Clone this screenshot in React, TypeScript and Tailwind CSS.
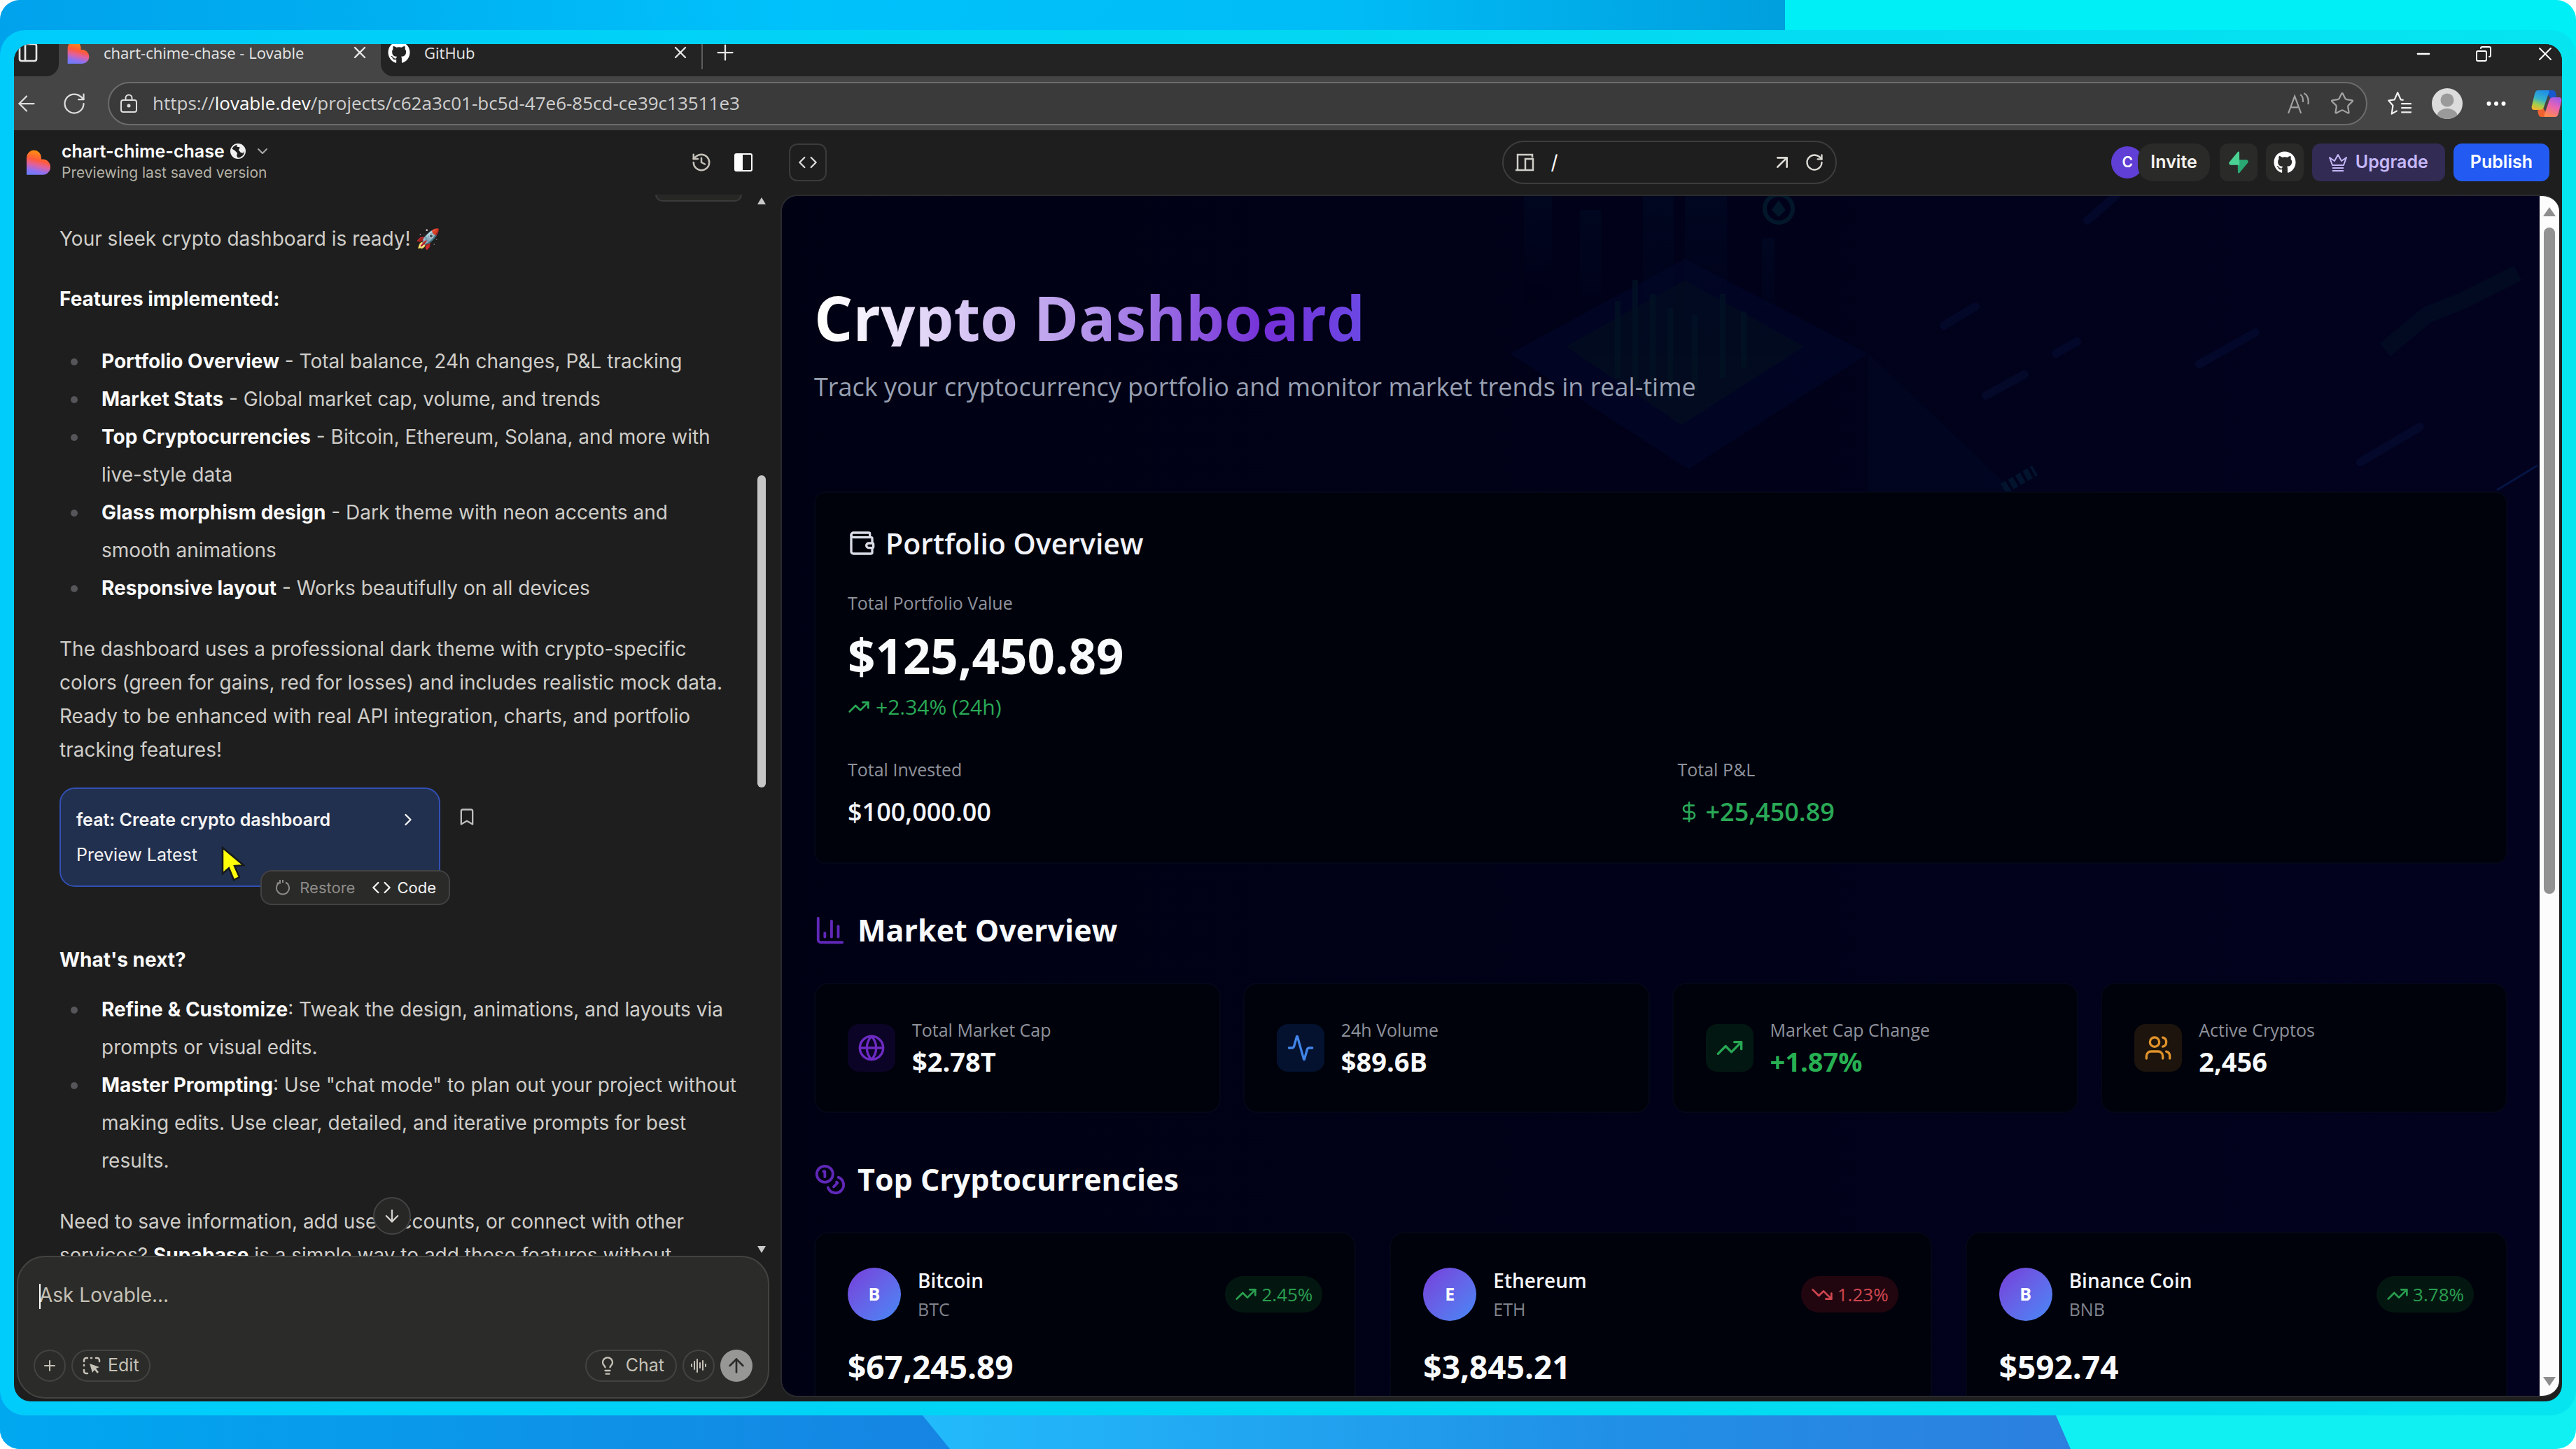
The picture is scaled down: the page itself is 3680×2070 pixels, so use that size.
import React from "react";
import {
	Activity,
	ArrowDown,
	ArrowLeft,
	ArrowUp,
	ArrowUpRight,
	AudioLines,
	Bookmark,
	ChartColumn,
	ChevronDown,
	ChevronRight,
	Code,
	Coins,
	Copy,
	DollarSign,
	Ellipsis,
	Globe,
	History,
	Lightbulb,
	Minus,
	PanelLeft,
	Plus,
	RotateCw,
	Star,
	TrendingDown,
	TrendingUp,
	Users,
	Wallet,
	X,
} from "lucide-react";
import { FaGithub } from "react-icons/fa";

const features = [
	{ name: "Portfolio Overview", text: " - Total balance, 24h changes, P&L tracking" },
	{ name: "Market Stats", text: " - Global market cap, volume, and trends" },
	{
		name: "Top Cryptocurrencies",
		text: " - Bitcoin, Ethereum, Solana, and more with live-style data",
	},
	{
		name: "Glass morphism design",
		text: " - Dark theme with neon accents and smooth animations",
	},
	{ name: "Responsive layout", text: " - Works beautifully on all devices" },
];

const nextSteps = [
	{
		name: "Refine & Customize",
		text: ": Tweak the design, animations, and layouts via prompts or visual edits.",
	},
	{
		name: "Master Prompting",
		text: ': Use "chat mode" to plan out your project without making edits. Use clear, detailed, and iterative prompts for best results.',
	},
];

const marketStats = [
	{
		label: "Total Market Cap",
		value: "$2.78T",
		icon: Globe,
		tile: "bg-[#0c0426] text-[#6d2bc4]",
		valueColor: "text-[#f8fafc]",
	},
	{
		label: "24h Volume",
		value: "$89.6B",
		icon: Activity,
		tile: "bg-[#041230] text-[#4285e8]",
		valueColor: "text-[#f8fafc]",
	},
	{
		label: "Market Cap Change",
		value: "+1.87%",
		icon: TrendingUp,
		tile: "bg-[#031712] text-[#27a854]",
		valueColor: "text-[#27b052]",
	},
	{
		label: "Active Cryptos",
		value: "2,456",
		icon: Users,
		tile: "bg-[#1c140d] text-[#e0922a]",
		valueColor: "text-[#f8fafc]",
	},
];

const coins = [
	{ name: "Bitcoin", symbol: "BTC", price: "$67,245.89", change: "2.45%", up: true },
	{ name: "Ethereum", symbol: "ETH", price: "$3,845.21", change: "1.23%", up: false },
	{ name: "Binance Coin", symbol: "BNB", price: "$592.74", change: "3.78%", up: true },
];

const LovableLogo: React.FC<{ id: string; className?: string }> = ({ id, className }) => (
	<svg viewBox="0 0 24 25" className={className} aria-hidden="true">
		<defs>
			<linearGradient id={id} x1="0.6" y1="0" x2="0.35" y2="1">
				<stop offset="0.1" stopColor="#ff8a14" />
				<stop offset="0.42" stopColor="#ff5a3c" />
				<stop offset="0.62" stopColor="#e0619f" />
				<stop offset="0.85" stopColor="#8f70f2" />
				<stop offset="1" stopColor="#6f7bf5" />
			</linearGradient>
		</defs>
		<path
			d="M0 25V7.6A7.4 7.4 0 0 1 14.8 7.6V9.4H16.3A7.7 7.8 0 0 1 16.3 25Z"
			fill={`url(#${id})`}
		/>
	</svg>
);

const SupabaseLogo = () => (
	<svg viewBox="0 0 24 24" className="size-8" aria-hidden="true">
		<path d="M12.9 23.2c-.6.7-1.7.3-1.7-.6L11 9.2h9.3c1.7 0 2.6 1.9 1.6 3.2z" fill="#2aa873" />
		<path d="M11.1.8c.6-.7 1.7-.3 1.7.6l.1 13.4H3.7c-1.7 0-2.6-1.9-1.6-3.2z" fill="#4bd193" />
	</svg>
);

const CopilotLogo = () => (
	<svg viewBox="0 0 44 40" className="h-10 w-11 shrink-0" aria-hidden="true">
		<defs>
			<linearGradient id="copilot-a" x1="0.6" y1="0" x2="0.3" y2="1">
				<stop offset="0" stopColor="#1f8fe8" />
				<stop offset="0.45" stopColor="#35b3c9" />
				<stop offset="0.75" stopColor="#a5cf4a" />
				<stop offset="1" stopColor="#f2b32e" />
			</linearGradient>
			<linearGradient id="copilot-b" x1="0.7" y1="0" x2="0.3" y2="1">
				<stop offset="0" stopColor="#a05be8" />
				<stop offset="0.45" stopColor="#e863b4" />
				<stop offset="1" stopColor="#ff8a4c" />
			</linearGradient>
		</defs>
		<path d="M20 1h11c3 0 4 3 5 9l-8 3z" fill="#1659cf" />
		<path d="M24 39H14c-3 0-4-4-5-9l8-4z" fill="#f0622f" />
		<path d="M10 1h14c2 0 2 2 1 4l-7 20c-1 3-3 4-6 4H4c-3 0-4-3-3-6L5 6c1-3 2-5 5-5z" fill="url(#copilot-a)" />
		<path d="M34 39H20c-2 0-2-2-1-4l7-20c1-3 3-4 6-4h8c3 0 4 3 3 6l-4 17c-1 3-2 5-5 5z" fill="url(#copilot-b)" />
	</svg>
);

const Backdrop = () => (
	<svg
		viewBox="0 0 3680 2070"
		preserveAspectRatio="none"
		className="absolute inset-0 size-full"
		aria-hidden="true"
	>
		<defs>
			<linearGradient id="bd-top">
				<stop offset="0" stopColor="#00a2ec" />
				<stop offset="0.18" stopColor="#00adef" />
				<stop offset="0.45" stopColor="#00c2fb" />
				<stop offset="0.75" stopColor="#00bcf6" />
				<stop offset="1" stopColor="#009fdd" />
			</linearGradient>
			<linearGradient id="bd-left">
				<stop offset="0" stopColor="#00a8f0" />
				<stop offset="1" stopColor="#1684e2" />
			</linearGradient>
			<linearGradient id="bd-mid" x1="0.44">
				<stop offset="0" stopColor="#22bbfb" />
				<stop offset="0.6" stopColor="#2090e6" />
				<stop offset="1" stopColor="#2c7fde" />
			</linearGradient>
		</defs>
		<rect width="2550" height="1035" fill="url(#bd-top)" />
		<rect x="2550" width="1130" height="1035" fill="#00eef6" />
		<rect y="1035" width="3680" height="1035" fill="#10f0f3" />
		<path d="M0 1035H2600L2937 2022L2958 2070H0Z" fill="url(#bd-mid)" />
		<path d="M0 1035H900L1318 2022L1357 2070H0Z" fill="url(#bd-left)" />
	</svg>
);

const BrowserTabs = () => (
	<div className="flex h-[46px] shrink-0 overflow-hidden bg-[#454545] font-['Open_Sans',sans-serif] text-[22px] leading-6 text-[#e6e6e6]">
		<div className="flex w-16 items-start rounded-br-[18px] bg-[#232323] pl-1">
			<button aria-label="Tab actions" className="flex h-6 items-center">
				<PanelLeft className="size-8" strokeWidth={2} />
			</button>
		</div>
		<div className="flex w-[460px] items-start pr-4 pl-3">
			<div className="flex h-6 w-full items-center">
				<LovableLogo id="tab-heart" className="h-8 w-8" />
				<span className="ml-5">chart-chime-chase - Lovable</span>
				<button aria-label="Close tab" className="ml-auto">
					<X className="size-7" strokeWidth={2} />
				</button>
			</div>
		</div>
		<div className="flex flex-1 items-start rounded-bl-[18px] bg-[#232323]">
			<div className="flex h-6 w-[458px] items-center pr-4 pl-[10px]">
				<FaGithub className="size-8 text-white" />
				<span className="ml-5">GitHub</span>
				<button aria-label="Close tab" className="ml-auto">
					<X className="size-7" strokeWidth={2} />
				</button>
			</div>
			<span className="h-9 w-0.5 bg-[#5c5c5c]" />
			<button aria-label="New tab" className="ml-[14px] flex h-6 items-center">
				<Plus className="size-9" strokeWidth={1.5} />
			</button>
			<div className="ml-auto flex h-7 items-center gap-[60px] pr-2 text-white">
				<button aria-label="Minimize">
					<Minus className="size-7" strokeWidth={2} />
				</button>
				<button aria-label="Restore window">
					<Copy className="size-6 -scale-x-100" strokeWidth={2} />
				</button>
				<button aria-label="Close window">
					<X className="size-8" strokeWidth={1.5} />
				</button>
			</div>
		</div>
	</div>
);

const AddressBar = () => (
	<div className="flex h-[77px] shrink-0 items-center bg-[#454545] text-[#dedede]">
		<button aria-label="Back">
			<ArrowLeft className="size-9" strokeWidth={1.5} />
		</button>
		<button aria-label="Refresh" className="ml-8">
			<RotateCw className="size-9" strokeWidth={1.5} />
		</button>
		<div className="mr-7 ml-[30px] flex h-[62px] flex-1 items-center rounded-full border-2 border-[#6c6c6c] bg-[#3a3a3a] pr-4 pl-4">
			<svg viewBox="0 0 24 28" className="h-7 w-6" fill="none" stroke="currentColor" strokeWidth="2" aria-hidden="true">
				<rect x="1" y="9" width="22" height="17" rx="3" />
				<path d="M7.500 9V6a4.500 4.500 0 0 1 9 0v3" />
				<circle cx="12" cy="17" r="1.500" fill="currentColor" />
			</svg>
			<p className="ml-[22px] font-['Open_Sans',sans-serif] text-[26px] text-[#cfcfcf]">
				https://<span className="text-white">lovable.dev</span>
				/projects/c62a3c01-bc5d-47e6-85cd-ce39c13511e3
			</p>
			<button aria-label="Read aloud" className="ml-auto text-[#a2a2a2]">
				<svg viewBox="0 0 30 30" className="size-8" fill="none" stroke="currentColor" strokeWidth="2" aria-hidden="true">
					<path d="M1 28 9.500 5 18 28M4 20h11M17 3c3 2 4 6 3.500 10M22 1c5 3 6.500 9 5.500 15" />
				</svg>
			</button>
			<button aria-label="Add to favorites" className="ml-7 text-[#a2a2a2]">
				<Star className="size-9" strokeWidth={1.5} />
			</button>
		</div>
		<button aria-label="Favorites">
			<svg viewBox="0 0 32 32" className="size-9" fill="none" stroke="#f0f0f0" strokeWidth="2" strokeLinejoin="round" aria-hidden="true">
				<path d="M21 11.500 17.500 11 13.500 2 9.500 11 2 12l5.500 6.500L6 29l7-4M18 16h13M18 21.500h13M18 27h13" />
			</svg>
		</button>
		<button aria-label="Profile" className="ml-7">
			<svg viewBox="0 0 44 44" className="size-11" aria-hidden="true">
				<clipPath id="profile-clip">
					<circle cx="22" cy="22" r="22" />
				</clipPath>
				<g clipPath="url(#profile-clip)">
					<rect width="44" height="44" fill="#dcdcdc" />
					<circle cx="22" cy="17" r="9.500" fill="#9a9a9a" />
					<ellipse cx="22" cy="41" rx="15" ry="12" fill="#9a9a9a" />
				</g>
			</svg>
		</button>
		<button aria-label="Settings and more" className="mr-8 ml-[30px]">
			<Ellipsis className="size-9 text-white" strokeWidth={2} />
		</button>
		<button aria-label="Copilot">
			<CopilotLogo />
		</button>
	</div>
);

const ProjectHeader = () => (
	<header className="flex h-[92px] shrink-0 items-center">
		<div className="flex w-[1097px] items-center pr-[42px] pl-[18px]">
			<LovableLogo id="project-heart" className="h-9 w-[34px]" />
			<div className="ml-4">
				<button className="flex items-center text-[25px] leading-[30px] font-semibold text-white">
					chart-chime-chase
					<svg viewBox="0 0 24 24" className="ml-2 size-[22px]" aria-hidden="true">
						<circle cx="12" cy="12" r="11" fill="none" stroke="#f0f0f0" strokeWidth="2" />
						<path d="M11 1c5-1 10 3 12 9l-3 5-4-1-3-4 2-4-5-1zM2 8l5 3 4 4-1 4 2 4C5 22 0 17 1 9z" fill="#f0f0f0" />
					</svg>
					<ChevronDown className="ml-3 size-6 text-[#a8a8a8]" />
				</button>
				<p className="text-[21px] leading-[32px] text-[#b4b1a6]">Previewing last saved version</p>
			</div>
			<button aria-label="History" className="ml-auto">
				<History className="size-[30px] text-[#c5c1b8]" strokeWidth={2} />
			</button>
			<button aria-label="Toggle sidebar" className="ml-8">
				<svg viewBox="0 0 26 26" className="size-[26px]" aria-hidden="true">
					<rect x="1" y="1" width="24" height="24" rx="2" fill="none" stroke="#fff" strokeWidth="2" />
					<path d="M1 1h11v24H1z" fill="#fff" />
				</svg>
			</button>
		</div>
		<div className="grid flex-1 grid-cols-[1fr_auto_1fr] items-center pr-[18px] pl-[10px]">
			<button
				aria-label="Code"
				className="flex size-[54px] items-center justify-center rounded-xl border-2 border-[#3b3b3b] text-[#dcdcdc]"
			>
				<Code className="size-7" strokeWidth={2} />
			</button>
			<div className="flex h-[62px] w-[478px] items-center rounded-full border-2 border-[#3d3d3d] px-4">
				<svg viewBox="0 0 28 28" className="size-7" fill="none" stroke="#d0cec8" strokeWidth="2.500" aria-hidden="true">
					<path d="M1 25h13M4 25V3h21v4M15 25V9h11v16z" />
				</svg>
				<label className="ml-6 flex-1">
					<span className="sr-only">Route</span>
					<input
						defaultValue="/"
						className="h-10 w-full bg-transparent text-[28px] leading-10 text-white outline-none"
					/>
				</label>
				<button aria-label="Open in new tab">
					<ArrowUpRight className="size-8 text-[#dcdad4]" strokeWidth={2} />
				</button>
				<button aria-label="Reload preview" className="ml-4">
					<RotateCw className="size-7 text-[#dcdad4]" strokeWidth={2} />
				</button>
			</div>
			<div className="flex items-center justify-end text-[25px] font-semibold">
				<span className="flex size-[46px] items-center justify-center rounded-full bg-[#5f3fd6] text-[21px] text-white">
					C
				</span>
				<button className="relative -ml-2 h-[54px] rounded-[22px] bg-[#2a2a28] px-[18px] text-[#f5f3ee]">
					Invite
				</button>
				<button
					aria-label="Supabase"
					className="ml-[14px] flex size-[54px] items-center justify-center rounded-xl bg-[#2a2a28]"
				>
					<SupabaseLogo />
				</button>
				<button
					aria-label="GitHub"
					className="ml-3 flex size-[54px] items-center justify-center rounded-xl bg-[#2a2a28]"
				>
					<FaGithub className="size-8 text-white" />
				</button>
				<button className="ml-3 flex h-[54px] items-center gap-3 rounded-xl bg-[#322b54] px-6 text-[#c5b8f8]">
					<svg viewBox="0 0 26 26" className="size-[26px]" fill="none" stroke="currentColor" strokeWidth="2" strokeLinejoin="round" aria-hidden="true">
						<path d="M5 17h16l4-11-7 5-5-9-5 9-7-5zM5 21h16M5 25h16" />
					</svg>
					Upgrade
				</button>
				<button className="ml-3 h-[54px] rounded-xl bg-[#235bf2] px-6 text-white">Publish</button>
			</div>
		</div>
	</header>
);

const BulletList: React.FC<{ items: { name: string; text: string }[]; className: string }> = ({
	items,
	className,
}) => (
	<ul className={className}>
		{items.map((item) => (
			<li key={item.name} className="flex leading-[54px]">
				<span className="mt-[23px] mr-[34px] ml-4 size-[10px] shrink-0 rounded-full bg-[#55555a]" />
				<p>
					<strong className="font-bold text-[#fafafa]">{item.name}</strong>
					{item.text}
				</p>
			</li>
		))}
	</ul>
);

const VersionCard = () => (
	<div className="mt-[30px] flex gap-6">
		<div className="relative w-[544px] rounded-[22px] border-2 border-[#3150b4] bg-[#22304f] px-[22px] pt-7 pb-4 text-[25px]">
			<button className="flex h-8 w-full items-center justify-between pr-2 font-semibold text-[#f5f5f5]">
				feat: Create crypto dashboard
				<ChevronRight className="size-7" strokeWidth={2} />
			</button>
			<p className="mt-[18px] mb-3 leading-8 text-[#f2f2f2]">Preview Latest</p>
			<div className="absolute -right-4 -bottom-7 flex h-[50px] items-center rounded-2xl border-2 border-[#434143] bg-[#2a2a29] px-[18px] text-[22px]">
				<button className="flex items-center gap-3 text-[#8d8b88]">
					<svg viewBox="0 0 24 24" className="size-6" fill="none" stroke="currentColor" strokeWidth="2" aria-hidden="true">
						<path d="M8 4.500A9 9 0 1 0 16 4.500M8 1v4.500H3.500M12 1v4" />
					</svg>
					Restore
				</button>
				<button className="ml-6 flex items-center gap-2 text-[#f2f2f2]">
					<Code className="size-7" strokeWidth={2} />
					Code
				</button>
			</div>
			<svg viewBox="0 0 34 50" className="absolute top-[82px] left-[229px] h-[50px] w-[34px]" aria-hidden="true">
				<path d="M2 2v37l9-8 7 17 8-4-7-16 13-1z" fill="#fdfd0a" stroke="#15181c" strokeWidth="2.500" />
			</svg>
		</div>
		<button aria-label="Bookmark" className="mt-7 self-start">
			<Bookmark className="size-7 text-[#bdbdbd]" strokeWidth={2} />
		</button>
	</div>
);

const Composer = () => (
	<form className="relative mx-1 mb-1 h-[204px] shrink-0 rounded-[40px] border-2 border-[#434340] bg-[#2b2b29] p-[22px] text-[25px] text-[#c5c1b6]">
		<label className="block">
			<span className="sr-only">Message</span>
			<textarea
				placeholder="Ask Lovable..."
				className="mt-3 ml-2 block h-[98px] w-full resize-none bg-transparent text-[28px] leading-10 text-[#c5c1b6] outline-none placeholder:text-[#c5c1b6]"
			/>
		</label>
		<span className="absolute top-[38px] left-[30px] h-9 w-0.5 bg-white" />
		<div className="flex items-center gap-2">
			<button
				type="button"
				aria-label="Attach"
				className="flex size-[46px] items-center justify-center rounded-full border-2 border-[#434340]"
			>
				<Plus className="size-6" strokeWidth={2} />
			</button>
			<button
				type="button"
				className="flex h-[46px] items-center gap-[10px] rounded-full border-2 border-[#434340] px-[14px]"
			>
				<svg viewBox="0 0 26 26" className="size-[26px]" fill="none" stroke="currentColor" strokeWidth="2.500" strokeLinecap="round" aria-hidden="true">
					<path d="M2 7V5a3 3 0 0 1 3-3h2M19 2h2a3 3 0 0 1 3 3v2M7 24H5a3 3 0 0 1-3-3v-2M12 2h1M2 12v1" />
					<path d="M10 10l14 5-5 2 4 5-2 2-4-5-3 4z" fill="currentColor" stroke="none" />
				</svg>
				Edit
			</button>
			<button
				type="button"
				className="ml-auto flex h-[46px] items-center gap-3 rounded-full border-2 border-[#434340] px-4"
			>
				<Lightbulb className="size-7" strokeWidth={2} />
				Chat
			</button>
			<button
				type="button"
				aria-label="Voice"
				className="flex size-[46px] items-center justify-center rounded-full border-2 border-[#434340]"
			>
				<AudioLines className="size-6" strokeWidth={2} />
			</button>
			<button
				type="submit"
				aria-label="Send"
				className="flex size-[46px] items-center justify-center rounded-full bg-[#979795] text-[#2b2b29]"
			>
				<ArrowUp className="size-8" strokeWidth={2} />
			</button>
		</div>
	</form>
);

const ChatPanel = () => (
	<aside className="flex w-[1095px] shrink-0 flex-col">
		<div className="relative flex min-h-0 flex-1">
			<div className="min-w-0 flex-1 overflow-hidden pr-[22px] pl-[65px] text-[28px] leading-[48px] text-[#cfcdc9]">
				<div className="ml-auto h-[10px] w-[124px] rounded-b-xl border-2 border-t-0 border-[#3a3a3a] bg-[#272725]" />
				<p className="mt-[29px]">
					Your sleek crypto dashboard is ready! <span>🚀</span>
				</p>
				<p className="mt-[38px] font-bold text-[#fafafa]">Features implemented:</p>
				<BulletList items={features} className="mt-[38px]" />
				<p className="mt-9">
					The dashboard uses a professional dark theme with crypto-specific colors (green for gains, red for
					losses) and includes realistic mock data. Ready to be enhanced with real API integration, charts, and
					portfolio tracking features!
				</p>
				<VersionCard />
				<p className="mt-20 font-bold text-[#fafafa]">What's next?</p>
				<BulletList items={nextSteps} className="mt-5" />
				<p className="mt-9">
					Need to save information, add user accounts, or connect with other services?{" "}
					<strong className="font-bold text-[#fafafa]">Supabase</strong> is a simple way to add these
					features without leaving Lovable.
				</p>
			</div>
			<div className="mr-[21px] flex w-3 flex-col items-center py-1">
				<span className="border-x-[6px] border-b-[10px] border-x-transparent border-b-[#c9c9c9]" />
				<span className="grow-[26] basis-0" />
				<span className="w-3 grow-[30] basis-0 rounded-full bg-[#c6c6c6]" />
				<span className="grow-[44] basis-0" />
				<span className="border-x-[6px] border-t-[10px] border-x-transparent border-t-[#c9c9c9]" />
			</div>
			<div className="absolute inset-x-0 bottom-[30px] flex justify-center pr-4">
				<button
					aria-label="Scroll to bottom"
					className="flex size-[54px] items-center justify-center rounded-full border-2 border-[#434343] bg-[#272726]"
				>
					<ArrowDown className="size-7 text-[#d4d2cd]" strokeWidth={2} />
				</button>
			</div>
		</div>
		<div className="pr-3">
			<Composer />
		</div>
	</aside>
);

// faint isometric chart and ticker marks behind the page title
const HeroArt = () => (
	<svg
		viewBox="0 0 2511 422"
		preserveAspectRatio="xMaxYMin slice"
		className="absolute inset-x-0 top-0 h-[422px] w-full opacity-60"
		aria-hidden="true"
	>
		<defs>
			<linearGradient id="hero-fade" x1="0" y1="0" x2="0" y2="1">
				<stop offset="0" stopColor="#03122e" stopOpacity="0.6" />
				<stop offset="1" stopColor="#03122e" stopOpacity="0" />
			</linearGradient>
		</defs>
		<path d="M1040 225 1290 90 1552 225 1295 390Z" fill="#02072b" />
		<path d="M1120 215 1290 120 1460 215 1285 327Z" fill="#031224" />
		<path d="M1552 225V422H1760Z" fill="#020b28" opacity="0.700" />
		<g fill="url(#hero-fade)">
			<rect x="1060" y="0" width="40" height="150" />
			<rect x="1140" y="20" width="30" height="180" />
			<rect x="1230" y="0" width="44" height="230" />
			<rect x="1290" y="0" width="60" height="200" />
			<rect x="1400" y="60" width="18" height="150" />
		</g>
		<g fill="#04202b" opacity="0.700">
			<rect x="1190" y="150" width="8" height="110" />
			<rect x="1215" y="120" width="8" height="150" />
			<rect x="1240" y="140" width="8" height="140" />
			<rect x="1265" y="160" width="8" height="130" />
			<rect x="1300" y="170" width="8" height="110" />
			<rect x="1340" y="140" width="8" height="120" />
			<rect x="1370" y="165" width="8" height="80" />
		</g>
		<circle cx="1424" cy="18" r="20" fill="none" stroke="#052738" strokeWidth="6" />
		<path d="M1424 6 1434 20 1424 30 1414 20Z" fill="#052738" />
		<g stroke="#060d33" strokeWidth="12" strokeLinecap="round">
			<path d="M1865 35 1905 0M1660 185 1705 158M1820 225 1850 208M1720 285 1775 255M2025 240 2105 195M2255 380 2340 330" />
		</g>
		<g stroke="#031627" strokeWidth="24" opacity="0.700">
			<path d="M2290 220 2350 170 2400 150 2480 110" fill="none" />
		</g>
		<path d="M2450 420 2508 385" stroke="#08205c" strokeWidth="3" />
		<path d="M1745 418 1790 392" stroke="#04203a" strokeWidth="16" strokeDasharray="8 4" />
	</svg>
);

const PortfolioCard = () => (
	<section className="rounded-2xl border-2 border-[#030718] bg-[#00020b] px-[46px] py-12">
		<h2 className="flex items-center gap-[14px] text-[41px] leading-[48px] font-semibold text-[#f1f3fa]">
			<Wallet className="size-10 text-[#d9dbe6]" strokeWidth={2} />
			Portfolio Overview
		</h2>
		<p className="mt-11 text-[25px] leading-[34px] text-[#8f929c]">Total Portfolio Value</p>
		<p className="mt-[18px] text-[69px] leading-[80px] font-bold text-[#f8fafc]">$125,450.89</p>
		<p className="mt-[14px] flex items-center gap-2 text-[30px] leading-[40px] font-medium text-[#2aa957]">
			<TrendingUp className="size-8" strokeWidth={2} />
			+2.34% (24h)
		</p>
		<div className="mt-[52px] grid grid-cols-2 gap-12">
			<div>
				<p className="text-[25px] leading-[34px] text-[#8f929c]">Total Invested</p>
				<p className="mt-5 text-[36px] leading-[48px] font-semibold text-[#f3f5fa]">$100,000.00</p>
			</div>
			<div>
				<p className="text-[25px] leading-[34px] text-[#8f929c]">Total P&amp;L</p>
				<p className="mt-5 flex items-center gap-2 text-[36px] leading-[48px] font-semibold text-[#2aa957]">
					<DollarSign className="size-8" strokeWidth={2} />
					+25,450.89
				</p>
			</div>
		</div>
	</section>
);

const Dashboard = () => (
	<main className="relative flex-1 overflow-hidden bg-linear-to-r from-[#000113] to-[#02021f] px-[46px] pt-[131px] font-['Open_Sans',sans-serif]">
		<HeroArt />
		<div className="relative">
			<h1 className="w-fit bg-[linear-gradient(to_right,#ffffff_2%,#b394ea_50%,#7430d8_82%,#6b48e4)] bg-clip-text text-[87px] leading-[84px] font-bold text-transparent">
				Crypto Dashboard
			</h1>
			<p className="mt-8 mb-[123px] text-[36px] leading-[52px] text-[#98a0b2]">
				Track your cryptocurrency portfolio and monitor market trends in real-time
			</p>
			<PortfolioCard />
			<h2 className="mt-[67px] flex items-center gap-4 text-[43px] leading-[56px] font-bold text-[#f8fafc]">
				<ChartColumn className="size-[46px] text-[#6028b8]" strokeWidth={2} />
				Market Overview
			</h2>
			<div className="mt-[47px] grid grid-cols-4 gap-8">
				{marketStats.map((stat) => (
					<div
						key={stat.label}
						className="flex items-center gap-6 rounded-[20px] border-2 border-[#030718] bg-[#00020b] px-[46px] py-12"
					>
						<span className={`flex size-[68px] items-center justify-center rounded-2xl ${stat.tile}`}>
							<stat.icon className="size-10" strokeWidth={2} />
						</span>
						<div>
							<p className="text-[25px] leading-[34px] text-[#8f929c]">{stat.label}</p>
							<p className={`mt-1 text-[38px] leading-[48px] font-bold ${stat.valueColor}`}>{stat.value}</p>
						</div>
					</div>
				))}
			</div>
			<h2 className="mt-[67px] flex items-center gap-4 text-[43px] leading-[56px] font-bold text-[#f8fafc]">
				<Coins className="size-[46px] text-[#6028b8]" strokeWidth={2} />
				Top Cryptocurrencies
			</h2>
			<div className="mt-[47px] grid grid-cols-3 gap-12">
				{coins.map((coin) => (
					<div
						key={coin.name}
						className="rounded-[20px] border-2 border-[#030718] bg-[#00020b] px-[46px] py-12"
					>
						<div className="flex items-center">
							<span className="flex size-[76px] items-center justify-center rounded-full bg-linear-to-br from-[#743bd9] to-[#4088f6] text-[25px] font-bold text-white">
								{coin.symbol[0]}
							</span>
							<div className="ml-6">
								<h3 className="text-[28px] leading-[38px] font-semibold text-[#f3f5fa]">{coin.name}</h3>
								<p className="mt-1 text-[25px] leading-[36px] text-[#80838d]">{coin.symbol}</p>
							</div>
							<span
								className={
									coin.up
										? "ml-auto flex h-[52px] items-center gap-[6px] rounded-full bg-[#031710] px-[14px] text-[26px] text-[#2a9f50]"
										: "ml-auto flex h-[52px] items-center gap-[6px] rounded-full bg-[#22060f] px-[14px] text-[26px] text-[#cf4650]"
								}
							>
								{coin.up ? (
									<TrendingUp className="size-8" strokeWidth={2} />
								) : (
									<TrendingDown className="size-8" strokeWidth={2} />
								)}
								{coin.change}
							</span>
						</div>
						<p className="mt-9 text-[46px] leading-[56px] font-bold text-[#f8fafc]">{coin.price}</p>
					</div>
				))}
			</div>
		</div>
	</main>
);

const PreviewPanel = () => (
	<div className="mr-1 mb-[6px] flex min-w-0 flex-1 overflow-hidden rounded-[24px] border-2 border-r-0 border-[#2a2b2e]">
		<Dashboard />
		<div className="flex w-7 shrink-0 flex-col items-center bg-[#fcfcfc] pt-4 pb-[14px]">
			<span className="border-x-[9px] border-b-[13px] border-x-transparent border-b-[#8e8e8e]" />
			<span className="mt-4 w-4 grow-[58] basis-0 rounded-full bg-[#929292]" />
			<span className="grow-[42] basis-0" />
			<span className="border-x-[9px] border-t-[13px] border-x-transparent border-t-[#8e8e8e]" />
		</div>
	</div>
);

const App: React.FC = () => {
	return (
		<div className="h-screen bg-white">
			<div className="relative flex h-full overflow-hidden rounded-[28px] pt-[43px] pb-12">
				<Backdrop />
				<div className="relative flex min-w-0 flex-1 rounded-[36px] bg-linear-to-r from-[#00ccfb] via-[#02d6f2] to-[#06e4f0] p-5">
					<div className="flex min-w-0 flex-1 flex-col overflow-hidden rounded-[24px] bg-[#1e1e1e] font-['Inter',sans-serif]">
						<BrowserTabs />
						<AddressBar />
						<ProjectHeader />
						<div className="flex min-h-0 flex-1">
							<ChatPanel />
							<PreviewPanel />
						</div>
					</div>
				</div>
			</div>
		</div>
	);
};

export default App;
